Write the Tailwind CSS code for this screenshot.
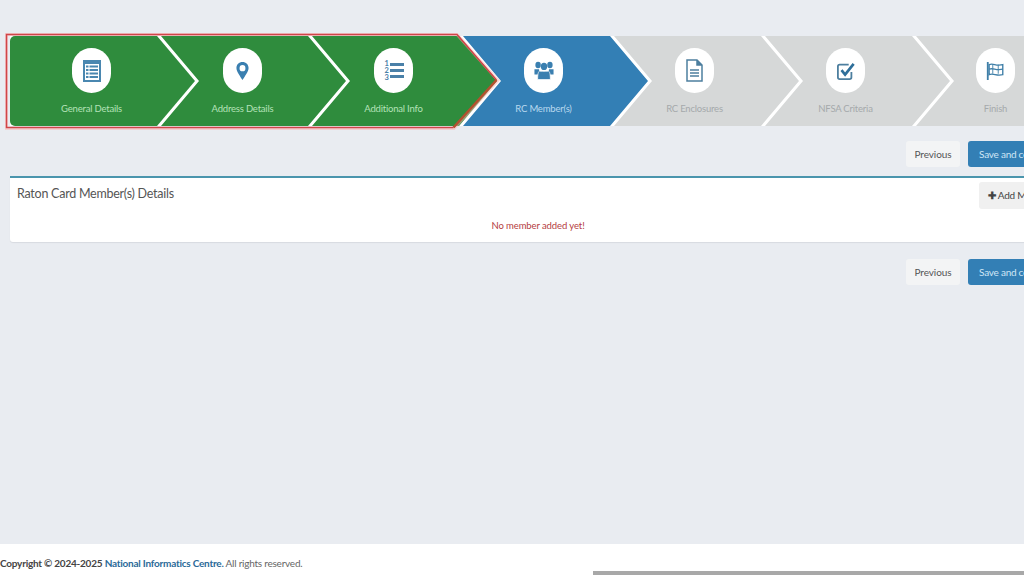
<!DOCTYPE html>
<html lang="en">
<head>
  <meta charset="UTF-8" />
  <title>Ration Card Wizard</title>
  <script src="https://cdn.jsdelivr.net/npm/@tailwindcss/browser@4"></script>
</head>
<body class="bg-[#e9ecf1] font-['Lato','Liberation_Sans',sans-serif] overflow-hidden h-[575px] w-[1024px] relative">
  <div class="h-[544px] overflow-hidden">
    <!-- Steps -->
    <div class="pt-[36px] pl-[10px] w-[1300px]">
    <div class="flex bg-white h-[90px]">
      <div class="w-[185px] h-[90px] -mr-[34px] shrink-0 pr-[22px] bg-[#2f8c3d] [clip-path:polygon(0_0,147px_0,185px_45px,147px_90px,0_90px)] rounded-l-[5px] flex flex-col items-center text-[#b4e2b8]">
        <div class="w-[39px] h-[45px] mt-[12px] rounded-full bg-white flex items-center justify-center">
          <svg width="18" height="22" viewBox="0 0 18 22"><rect width="18" height="22" fill="#4a87b0"/><rect x="2" y="4" width="14" height="16" fill="#fff"/><path d="M3 5.500h2.500v2H3zM6.500 5.500H15v2H6.500zM3 9h2.500v2H3zM6.500 9H15v2H6.500zM3 12.500h2.500v2H3zM6.500 12.500H15v2H6.500zM3 16h2.500v2H3zM6.500 16H15v2H6.500z" fill="#4a87b0"/></svg>
        </div>
        <span class="text-[9.5px] tracking-[-0.2px] leading-none mt-[11px]">General Details</span>
      </div>
      <div class="w-[185px] h-[90px] -mr-[34px] shrink-0 pr-[22px] bg-[#2f8c3d] [clip-path:polygon(0_0,147px_0,185px_45px,147px_90px,0_90px,38px_45px)] flex flex-col items-center text-[#b4e2b8]">
        <div class="w-[39px] h-[45px] mt-[12px] rounded-full bg-white flex items-center justify-center">
          <svg width="13" height="20" viewBox="0 0 15 22"><path fill-rule="evenodd" d="M7.500 0.500C3.400 0.500 0.500 3.500 0.500 7.500C0.500 12 5 17 7.500 21.500C10 17 14.500 12 14.500 7.500C14.500 3.500 11.600 0.500 7.500 0.500ZM7.500 4a3.400 3.700 0 1 1 0 7.400a3.400 3.700 0 1 1 0-7.400Z" fill="#3a7fb0"/></svg>
        </div>
        <span class="text-[9.5px] tracking-[-0.2px] leading-none mt-[11px]">Address Details</span>
      </div>
      <div class="w-[185px] h-[90px] -mr-[34px] shrink-0 pr-[22px] bg-[#2f8c3d] [clip-path:polygon(0_0,147px_0,185px_45px,147px_90px,0_90px,38px_45px)] flex flex-col items-center text-[#b4e2b8]">
        <div class="w-[39px] h-[45px] mt-[12px] rounded-full bg-white flex items-center justify-center">
          <svg width="20" height="23" viewBox="0 0 20 23" fill="#4a80a8"><rect x="6" y="4" width="14" height="3"/><rect x="6" y="10" width="14" height="3"/><rect x="6" y="16" width="14" height="3"/><text x="0.500" y="7" font-size="7.500" font-weight="700" font-family="Lato, sans-serif">1</text><text x="0.500" y="14" font-size="7.500" font-weight="700" font-family="Lato, sans-serif">2</text><text x="0.500" y="21" font-size="7.500" font-weight="700" font-family="Lato, sans-serif">3</text></svg>
        </div>
        <span class="text-[9.5px] tracking-[-0.2px] leading-none mt-[11px]">Additional Info</span>
      </div>
      <div class="w-[185px] h-[90px] -mr-[34px] shrink-0 pr-[24px] bg-[#337fb5] [clip-path:polygon(0_0,147px_0,185px_45px,147px_90px,0_90px,38px_45px)] flex flex-col items-center text-[#b9d9ef]">
        <div class="w-[39px] h-[45px] mt-[12px] rounded-full bg-white flex items-center justify-center">
          <svg width="20" height="21" viewBox="0 0 22 22" fill="#3a7fb0"><ellipse cx="4.500" cy="5" rx="3" ry="3.500"/><ellipse cx="17.500" cy="5" rx="3" ry="3.500"/><ellipse cx="11" cy="6.500" rx="3.500" ry="4"/><path d="M0.500 9.500h5l1 6h-6zM16.500 9.500h5v6h-6z"/><path d="M6 11.500c1 .5 9 .5 10 0c1.500 1 2 4 2 9.500H4c0-5.500 .5-8.500 2-9.500Z" stroke="#fff" stroke-width=".8"/></svg>
        </div>
        <span class="text-[9.5px] tracking-[-0.2px] leading-none mt-[11px]">RC Member(s)</span>
      </div>
      <div class="w-[185px] h-[90px] -mr-[34px] shrink-0 pr-[24px] bg-[#d6d8d8] [clip-path:polygon(0_0,147px_0,185px_45px,147px_90px,0_90px,38px_45px)] flex flex-col items-center text-[#a5a9ab]">
        <div class="w-[39px] h-[45px] mt-[12px] rounded-full bg-white flex items-center justify-center">
          <svg width="17" height="23" viewBox="0 0 17 23" fill="none" stroke="#4d7f9f" stroke-width="1.500"><path d="M1 1h10l5 5v16H1z"/><path d="M11 1v5h5" fill="#4d7f9f"/><path d="M4 11h9M4 14h9M4 17h9"/></svg>
        </div>
        <span class="text-[9.5px] tracking-[-0.2px] leading-none mt-[11px]">RC Enclosures</span>
      </div>
      <div class="w-[185px] h-[90px] -mr-[34px] shrink-0 pr-[24px] bg-[#d6d8d8] [clip-path:polygon(0_0,147px_0,185px_45px,147px_90px,0_90px,38px_45px)] flex flex-col items-center text-[#a5a9ab]">
        <div class="w-[39px] h-[45px] mt-[12px] rounded-full bg-white flex items-center justify-center">
          <svg width="18" height="20" viewBox="0 0 20 22" fill="none"><path d="M16 12v6a2 2 0 0 1-2 2H3a2 2 0 0 1-2-2V6a2 2 0 0 1 2-2h10" stroke="#4d7f9f" stroke-width="2"/><path d="M5 10l4 5L18.500 3" stroke="#2f6f9a" stroke-width="3"/></svg>
        </div>
        <span class="text-[9.5px] tracking-[-0.2px] leading-none mt-[11px]">NFSA Criteria</span>
      </div>
      <div class="w-[185px] h-[90px] -mr-[34px] shrink-0 pr-[26px] bg-[#d6d8d8] [clip-path:polygon(0_0,147px_0,185px_45px,147px_90px,0_90px,38px_45px)] flex flex-col items-center text-[#a5a9ab]">
        <div class="w-[39px] h-[45px] mt-[12px] rounded-full bg-white flex items-center justify-center">
          <svg width="19" height="20" viewBox="0 0 20 22" fill="none" stroke="#3f7fa8" stroke-width="1.500"><path d="M1.500 1v20" stroke-width="2"/><path d="M3 4c5-2 7 2 15 0v11c-7 2-10-2-15 0z"/><path d="M3 9c5-2 7 2 15 0" /><path d="M7 4v10M13 4v10" stroke-width="1"/></svg>
        </div>
        <span class="text-[9.5px] tracking-[-0.2px] leading-none mt-[11px]">Finish</span>
      </div>
    </div>
    </div>

    <!-- Top buttons -->
    <div class="flex justify-end gap-[8px] mt-[15px] w-[1066px]">
      <button class="w-[54px] h-[26px] bg-[#f3f4f5] rounded-[3px] text-[10px] tracking-[-0.1px] text-[#555]">Previous</button>
      <button class="w-[98px] h-[26px] bg-[#337fb5] rounded-[3px] text-[10px] tracking-[-0.25px] text-[#cfe6f5] shrink-0">Save and continue</button>
    </div>

    <!-- Panel -->
    <div class="ml-[10px] mt-[9px] w-[1056px] h-[66px] bg-white border-t-[2px] border-[#4a95ad] rounded-b-[3px] shadow-[0_1px_1px_#d8dbe0] px-[7px]">
      <div class="flex justify-between items-start pt-[4px]">
        <h3 class="text-[12.5px] tracking-[-0.25px] leading-[24px] text-[#555]">Raton Card Member(s) Details</h3>
        <button class="w-[87px] h-[27px] bg-[#f0f0f0] rounded-[3px] text-[10px] tracking-[-0.25px] text-[#444] -mr-[7px] text-left pl-[9px]"><span class="font-black">✚</span> Add Member</button>
      </div>
      <p class="text-center text-[9.5px] tracking-[-0.1px] leading-none text-[#b5403f] mt-[12px]">No member added yet!</p>
    </div>

    <!-- Bottom buttons -->
    <div class="flex justify-end gap-[8px] mt-[17px] w-[1066px]">
      <button class="w-[54px] h-[26px] bg-[#f3f4f5] rounded-[3px] text-[10px] tracking-[-0.1px] text-[#555]">Previous</button>
      <button class="w-[98px] h-[26px] bg-[#337fb5] rounded-[3px] text-[10px] tracking-[-0.25px] text-[#cfe6f5] shrink-0">Save and continue</button>
    </div>
  </div>

  <!-- Footer -->
  <div class="h-[31px] bg-white pt-[13px] text-[10px] tracking-[-0.23px] leading-[13px] text-[#666]">
    <b class="text-[#444]">Copyright © 2024-2025</b> <b class="text-[#2b6a98]">National Informatics Centre.</b> All rights reserved.
  </div>
  <div class="absolute left-[593px] right-0 bottom-0 h-[4px] bg-[#a8a8a8]"></div>

  <!-- Red annotation outline over the first three steps -->
  <svg class="absolute left-0 top-0 pointer-events-none" width="520" height="140" fill="none"><path d="M6.500 34.500H457L498 80.500L454 128.500H6.500Z" stroke="#ffb0b0" stroke-width="3" opacity="0.5"/><path d="M496.500 80L457 34.500H6.500V127.500H453.500" stroke="#cf4548" stroke-width="1.500"/><path d="M496.500 80L453.500 127.500" stroke="#b4502f" stroke-width="2.500"/></svg>
</body>
</html>
